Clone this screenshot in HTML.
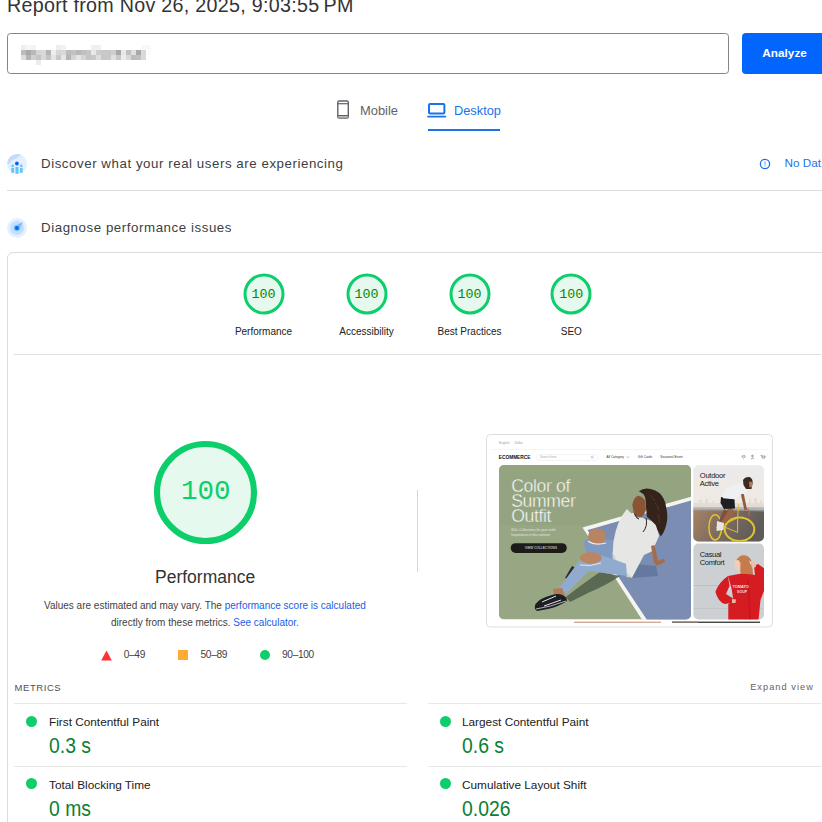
<!DOCTYPE html>
<html><head><meta charset="utf-8">
<style>
*{margin:0;padding:0;box-sizing:border-box}
html,body{width:822px;height:822px;overflow:hidden;background:#fff}
body{position:relative;font-family:"Liberation Sans",sans-serif;color:#202124}
.a{position:absolute;white-space:nowrap}
.t{line-height:1}
</style></head><body>

<!-- header -->
<div class="a t" id="hdr" style="left:7px;top:-3.9px;font-size:19.7px;letter-spacing:0.28px;color:#333336">Report from Nov 26, 2025, 9:03:55&#8201;PM</div>

<!-- input -->
<div class="a" style="left:7px;top:33px;width:722px;height:41px;border:1px solid #80868b;border-radius:3.5px"></div>
<svg class="a" style="left:21px;top:45px" width="130" height="20" viewBox="0 0 130 20" shape-rendering="crispEdges"><rect x="0" y="0" width="5" height="5" fill="#eeeeee"/><rect x="5" y="0" width="5" height="5" fill="#f6f6f6"/><rect x="10" y="0" width="5" height="5" fill="#f3f3f3"/><rect x="35" y="0" width="5" height="5" fill="#eeeeee"/><rect x="40" y="0" width="5" height="5" fill="#f2f2f2"/><rect x="70" y="0" width="5" height="5" fill="#f0f0f0"/><rect x="75" y="0" width="5" height="5" fill="#f0f0f0"/><rect x="120" y="0" width="5" height="5" fill="#f8f8f8"/><rect x="125" y="0" width="5" height="5" fill="#f8f8f8"/><rect x="0" y="5" width="5" height="5" fill="#bbbbbb"/><rect x="5" y="5" width="5" height="5" fill="#a9a9a9"/><rect x="10" y="5" width="5" height="5" fill="#b9b9b9"/><rect x="15" y="5" width="5" height="5" fill="#d6d6d6"/><rect x="20" y="5" width="5" height="5" fill="#d9d9d9"/><rect x="25" y="5" width="5" height="5" fill="#b4b4b4"/><rect x="30" y="5" width="5" height="5" fill="#eeeeee"/><rect x="35" y="5" width="5" height="5" fill="#d6d6d6"/><rect x="40" y="5" width="5" height="5" fill="#d8d8d8"/><rect x="45" y="5" width="5" height="5" fill="#bcbcbc"/><rect x="50" y="5" width="5" height="5" fill="#c2c2c2"/><rect x="55" y="5" width="5" height="5" fill="#b8b8b8"/><rect x="60" y="5" width="5" height="5" fill="#c0c0c0"/><rect x="65" y="5" width="5" height="5" fill="#c5c5c5"/><rect x="70" y="5" width="5" height="5" fill="#e8e8e8"/><rect x="75" y="5" width="5" height="5" fill="#cccccc"/><rect x="80" y="5" width="5" height="5" fill="#c8c8c8"/><rect x="85" y="5" width="5" height="5" fill="#c8c8c8"/><rect x="90" y="5" width="5" height="5" fill="#cdcdcd"/><rect x="95" y="5" width="5" height="5" fill="#a8a8a8"/><rect x="100" y="5" width="5" height="5" fill="#e8e8ea"/><rect x="105" y="5" width="5" height="5" fill="#c0c0c0"/><rect x="110" y="5" width="5" height="5" fill="#e0e0e2"/><rect x="115" y="5" width="5" height="5" fill="#a8a8aa"/><rect x="120" y="5" width="5" height="5" fill="#d8d8d8"/><rect x="125" y="5" width="5" height="5" fill="#fbfbfb"/><rect x="0" y="10" width="5" height="5" fill="#dcdde0"/><rect x="5" y="10" width="5" height="5" fill="#b5b5b5"/><rect x="10" y="10" width="5" height="5" fill="#cfcfcf"/><rect x="15" y="10" width="5" height="5" fill="#c5c5c5"/><rect x="20" y="10" width="5" height="5" fill="#d8d8d8"/><rect x="25" y="10" width="5" height="5" fill="#c4c4c4"/><rect x="30" y="10" width="5" height="5" fill="#e2e4e6"/><rect x="35" y="10" width="5" height="5" fill="#c8c8c8"/><rect x="40" y="10" width="5" height="5" fill="#e6e6e6"/><rect x="45" y="10" width="5" height="5" fill="#b5b5b8"/><rect x="50" y="10" width="5" height="5" fill="#d3d3d3"/><rect x="55" y="10" width="5" height="5" fill="#e5e5e5"/><rect x="60" y="10" width="5" height="5" fill="#d5d5d5"/><rect x="65" y="10" width="5" height="5" fill="#c5c5c5"/><rect x="70" y="10" width="5" height="5" fill="#c8c8c8"/><rect x="75" y="10" width="5" height="5" fill="#dedede"/><rect x="80" y="10" width="5" height="5" fill="#c8c8c8"/><rect x="85" y="10" width="5" height="5" fill="#c8c8c8"/><rect x="90" y="10" width="5" height="5" fill="#e0e0e0"/><rect x="95" y="10" width="5" height="5" fill="#c8c8c8"/><rect x="100" y="10" width="5" height="5" fill="#ececea"/><rect x="105" y="10" width="5" height="5" fill="#d8d8d8"/><rect x="110" y="10" width="5" height="5" fill="#bdbdbd"/><rect x="115" y="10" width="5" height="5" fill="#c0c0c0"/><rect x="120" y="10" width="5" height="5" fill="#dadada"/><rect x="15" y="15" width="5" height="5" fill="#ececec"/></svg>

<!-- analyze -->
<div class="a" style="left:742px;top:33px;width:90px;height:41px;background:#0265fe;border-radius:4px"></div>
<div class="a t" style="left:762.3px;top:47.8px;font-size:11.8px;font-weight:bold;color:#fff">Analyze</div>

<!-- tabs -->
<svg class="a" style="left:336px;top:99px" width="14" height="21" viewBox="0 0 14 21">
  <rect x="1.8" y="2" width="10.5" height="17.1" rx="1.4" fill="none" stroke="#5f6368" stroke-width="1.4"/>
  <rect x="1.5" y="4.1" width="11" height="1.2" fill="#5f6368"/>
  <rect x="1.5" y="16" width="11" height="1.1" fill="#5f6368"/>
  <rect x="2.5" y="17.1" width="9.2" height="1.6" fill="#a9abad"/>
</svg>
<div class="a t" style="left:360px;top:105px;font-size:12.9px;color:#5f6368">Mobile</div>

<svg class="a" style="left:426px;top:101px" width="22" height="18" viewBox="0 0 22 18">
  <rect x="3" y="2.9" width="15.4" height="9.7" rx="1" fill="none" stroke="#1a73e8" stroke-width="2"/>
  <rect x="1.1" y="14.7" width="19.2" height="1.7" rx="0.8" fill="#1a73e8"/>
</svg>
<div class="a t" style="left:454px;top:105px;font-size:12.8px;color:#1a73e8">Desktop</div>
<div class="a" style="left:428px;top:129px;width:72px;height:2px;background:#1a73e8"></div>

<!-- discover row -->
<svg class="a" style="left:7px;top:154px" width="20" height="20" viewBox="0 0 20 20">
  <circle cx="10" cy="10" r="10" fill="#e5f0fe"/>
  <path d="M0.2 9.6 A10 10 0 0 1 14.5 1.1 L12.3 2 L10.5 4 L8 5 L5 6.5 L3 9 L1.5 10.6 Z" fill="#c3dbfc"/>
  <circle cx="9.9" cy="9.5" r="1.9" fill="#0962f6"/>
  <circle cx="5.7" cy="11.9" r="1.3" fill="#64c4fd"/>
  <circle cx="14.3" cy="11.9" r="1.3" fill="#64c4fd"/>
  <rect x="4.3" y="14" width="2.8" height="4.8" fill="#64c4fd"/>
  <rect x="8.5" y="12.9" width="3" height="6.9" fill="#64c4fd"/>
  <rect x="12.9" y="14" width="2.8" height="4.8" fill="#64c4fd"/>
</svg>
<div class="a t" style="left:41px;top:157px;font-size:13.3px;letter-spacing:0.55px;color:#3c4043">Discover what your real users are experiencing</div>
<svg class="a" style="left:759px;top:158px" width="12" height="12" viewBox="0 0 12 12">
  <circle cx="6" cy="6" r="4.6" fill="none" stroke="#1a73e8" stroke-width="1.3"/>
  <rect x="5.5" y="3.5" width="1" height="3.4" fill="#1a73e8" opacity="0.7"/>
  <rect x="5.5" y="7.7" width="1" height="1" fill="#1a73e8" opacity="0.7"/>
</svg>
<div class="a t" style="left:784.5px;top:156.8px;font-size:11.7px;letter-spacing:0px;color:#1a73e8">No Dat</div>
<div class="a" style="left:7px;top:190px;width:815px;height:1px;background:#dadce0"></div>

<!-- diagnose row -->
<svg class="a" style="left:7px;top:218px" width="20" height="20" viewBox="0 0 20 20">
  <circle cx="10" cy="10" r="10" fill="#e5f0fe"/>
  <circle cx="10" cy="10" r="7" fill="#c8defd"/>
  <path d="M7.5 7.9 L15.9 4.1 L12.1 12.5 Z" fill="#6fc5fc"/>
  <circle cx="9.9" cy="10.1" r="3.2" fill="#6fc5fc"/>
  <circle cx="9.9" cy="10.1" r="2" fill="#0962f6"/>
</svg>
<div class="a t" style="left:41px;top:221px;font-size:13.3px;letter-spacing:0.56px;color:#3c4043">Diagnose performance issues</div>

<!-- card -->
<div class="a" style="left:7px;top:252px;width:830px;height:700px;border:1px solid #dadce0;border-radius:6px"></div>

<!-- small gauges -->
<svg class="a" style="left:241.5px;top:272px" width="44" height="44" viewBox="0 0 44 44"><circle cx="22" cy="22" r="19" fill="#e6f9ee" stroke="#0cce6b" stroke-width="3"/></svg>
<div class="a t" style="left:223.5px;width:80px;text-align:center;top:288px;font-size:13.3px;font-family:'Liberation Mono',monospace;color:#008a00">100</div>
<div class="a t" style="left:218.5px;width:90px;text-align:center;top:327px;font-size:10px;color:#212121">Performance</div>
<svg class="a" style="left:344.5px;top:272px" width="44" height="44" viewBox="0 0 44 44"><circle cx="22" cy="22" r="19" fill="#e6f9ee" stroke="#0cce6b" stroke-width="3"/></svg>
<div class="a t" style="left:326.5px;width:80px;text-align:center;top:288px;font-size:13.3px;font-family:'Liberation Mono',monospace;color:#008a00">100</div>
<div class="a t" style="left:321.5px;width:90px;text-align:center;top:327px;font-size:10px;color:#212121">Accessibility</div>
<svg class="a" style="left:447.5px;top:272px" width="44" height="44" viewBox="0 0 44 44"><circle cx="22" cy="22" r="19" fill="#e6f9ee" stroke="#0cce6b" stroke-width="3"/></svg>
<div class="a t" style="left:429.5px;width:80px;text-align:center;top:288px;font-size:13.3px;font-family:'Liberation Mono',monospace;color:#008a00">100</div>
<div class="a t" style="left:424.5px;width:90px;text-align:center;top:327px;font-size:10px;color:#212121">Best Practices</div>
<svg class="a" style="left:549.3px;top:272px" width="44" height="44" viewBox="0 0 44 44"><circle cx="22" cy="22" r="19" fill="#e6f9ee" stroke="#0cce6b" stroke-width="3"/></svg>
<div class="a t" style="left:531.3px;width:80px;text-align:center;top:288px;font-size:13.3px;font-family:'Liberation Mono',monospace;color:#008a00">100</div>
<div class="a t" style="left:526.3px;width:90px;text-align:center;top:327px;font-size:10px;color:#212121">SEO</div>

<div class="a" style="left:14px;top:354px;width:807px;height:1px;background:#e0e0e0"></div>

<!-- big gauge -->
<svg class="a" style="left:153px;top:440px" width="105" height="105" viewBox="0 0 105 105">
  <circle cx="52.5" cy="52.5" r="48.5" fill="#e6f9ee" stroke="#0cce6b" stroke-width="6.2"/>
</svg>
<div class="a t" style="left:181px;top:478px;font-size:27.5px;font-family:'Liberation Mono',monospace;color:#0cce6b">100</div>
<div class="a t" style="left:155px;top:569px;font-size:17.5px;color:#333333">Performance</div>
<div class="a t" style="left:44px;top:601px;font-size:10px;color:#424242">Values are estimated and may vary. The <span style="color:#1a5ce8">performance score is calculated</span></div>
<div class="a t" style="left:111px;top:618px;font-size:10px;color:#424242">directly from these metrics. <span style="color:#1a5ce8">See calculator.</span></div>

<!-- legend -->
<svg class="a" style="left:101px;top:650px" width="11" height="11" viewBox="0 0 11 11"><path d="M5.5 0.5 L10.8 10.5 L0.2 10.5 Z" fill="#ff3333"/></svg>
<div class="a t" style="left:123.7px;top:649.6px;font-size:10.2px;letter-spacing:-0.35px;color:#424242">0–49</div>
<div class="a" style="left:178px;top:650px;width:10px;height:10px;background:#ffaa33"></div>
<div class="a t" style="left:200.5px;top:649.6px;font-size:10.2px;letter-spacing:-0.35px;color:#424242">50–89</div>
<div class="a" style="left:260px;top:650px;width:10px;height:10px;border-radius:50%;background:#0cce6b"></div>
<div class="a t" style="left:282px;top:649.6px;font-size:10.2px;letter-spacing:-0.35px;color:#424242">90–100</div>

<!-- vertical divider -->
<div class="a" style="left:417px;top:490px;width:1px;height:82px;background:#d6d6d6"></div>

<!-- screenshot thumb -->
<svg class="a" style="left:486px;top:434px" width="288" height="194" viewBox="486 434 288 194">
<defs>
  <clipPath id="heroclip"><rect x="499" y="465" width="192" height="154.5" rx="5"/></clipPath>
  <clipPath id="oclip"><rect x="693.3" y="465.2" width="70.7" height="76.3" rx="5"/></clipPath>
  <clipPath id="cclip"><rect x="693.4" y="543.6" width="70.6" height="75.8" rx="5"/></clipPath>
  <linearGradient id="sky" x1="0" y1="0" x2="0" y2="1">
    <stop offset="0" stop-color="#ebebeb"/><stop offset="0.5" stop-color="#efe9e2"/><stop offset="0.6" stop-color="#e9dfd3"/><stop offset="1" stop-color="#ddd2c6"/>
  </linearGradient>
  <linearGradient id="ground" x1="0" y1="0" x2="1" y2="0.3">
    <stop offset="0" stop-color="#a78466"/><stop offset="0.5" stop-color="#7d6c60"/><stop offset="1" stop-color="#5e5b5a"/>
  </linearGradient>
</defs>
<rect x="486.5" y="434.5" width="286" height="192.5" rx="4" fill="#fff" stroke="#dedede"/>
<!-- top bar -->
<g font-family="Liberation Sans" font-size="3.2" fill="#a0a0a0">
  <text x="499" y="444">English</text><text x="514.5" y="444">Dollar</text>
</g>
<rect x="491" y="449" width="277" height="0.6" fill="#eeeeee"/>
<text x="498.8" y="459.3" font-family="Liberation Sans" font-weight="bold" font-size="4.85" fill="#111" letter-spacing="-0.05">ECOMMERCE</text>
<rect x="536.7" y="454.6" width="61.3" height="5.8" rx="2.9" fill="#fff" stroke="#e6e6e6" stroke-width="0.5"/>
<text x="540" y="458.4" font-family="Liberation Sans" font-size="3" fill="#aaa">Search here</text>
<circle cx="592.3" cy="457.2" r="1" fill="none" stroke="#888" stroke-width="0.4"/>
<g font-family="Liberation Sans" font-size="3.2" fill="#333">
  <text x="606.5" y="458.3">All Category</text>
  <text x="637.8" y="458.3">Gift Cards</text>
  <text x="660.3" y="458.3">Seasonal Event</text>
</g>
<path d="M626.8 456.6 l1 1 l1 -1" fill="none" stroke="#444" stroke-width="0.45"/>
<path d="M742 456 q1 -1.2 1.6 0 q0.6 -1.2 1.6 0 q0 1.2 -1.6 2.3 q-1.6 -1.1 -1.6 -2.3z" fill="none" stroke="#444" stroke-width="0.5"/>
<circle cx="752.5" cy="456" r="0.9" fill="none" stroke="#444" stroke-width="0.5"/>
<path d="M750.9 459 q1.6 -2 3.2 0" fill="none" stroke="#444" stroke-width="0.5"/>
<path d="M760.6 455.3 h1 l0.8 2.8 h2.2 l0.6 -2 h-3.2" fill="none" stroke="#444" stroke-width="0.5"/>

<!-- hero -->
<g clip-path="url(#heroclip)">
  <rect x="499" y="465" width="192" height="154.5" fill="#97a683"/>
  <rect x="499" y="465" width="192" height="60" fill="#93a380" opacity="0.6"/>
  <!-- court blue -->
  <path d="M586 530.5 L692 500 L692 620 L647 620 Z" fill="#7b8db2"/>
  <!-- white lines -->
  <path d="M582.5 527.4 L692 496.4 L692 500.2 L587.5 530 L647 620 L642.2 620 Z" fill="#f4f4f2"/>
  <!-- shadow -->
  <path d="M566 597 Q585 582 600 572 L620 576 Q605 586 590 592 L570 602 Z" fill="#4f5e4a" opacity="0.85"/>
  <path d="M626 563 L656 566 L658 576 L632 578 Z" fill="#5d6f97" opacity="0.7"/>
  <!-- back shoe -->
  <path d="M565 578 L572 566 L578 569 L574 582 Z" fill="#2a2c30"/>
  <!-- jeans back leg (knee1) -->
  <path d="M583 543 Q588 536 598 538 L614 540 Q622 548 626 566 L606 566 Q600 558 597 553 L588 556 Z" fill="#7f99c0"/>
  <ellipse cx="597" cy="536.5" rx="9" ry="8" fill="#b98462"/>
  <path d="M588 541 Q595 546 606 543" stroke="#e8ecef" stroke-width="1.2" fill="none"/>
  <!-- shirt -->
  <path d="M627 509 Q631 514 635 515 L644 518.5 L656 522.5 L659 536 L652.5 551 L644 555 L632 577.7 Q626 575 621 570 L612.6 555 L613.4 541.5 Q617 520 627 509 Z" fill="#e6e6e4"/>
  <path d="M612.6 552 Q618 566 632 577.7 L627 577 Q617 568 612.6 558 Z" fill="#d2d2d0"/>
  <!-- hair -->
  <path d="M638.9 491.3 Q643 488 649 488.7 Q656 490 660 493.5 Q665 499 665.9 505.9 Q667.5 512 667.3 519 Q666 530 660.8 536.6 Q657 530 655.7 524.9 Q651 520 646.9 516.8 Q646 508 645.4 498.6 Q644 494 642.5 493.5 Z" fill="#33231a"/>
  <path d="M650 495 q3 2 5 6 M655 503 q3 3 4 8 M658 514 q2 5 1 10" stroke="#5a3a26" stroke-width="0.8" fill="none"/>
  <path d="M646 518 Q648 526 643 532" stroke="#33231a" stroke-width="1" fill="none"/>
  <!-- face -->
  <path d="M632.3 504.4 Q634 497 638.1 495.7 Q642 496 644.7 500 L646 510 Q644 516 640.3 517.6 Q636 517 633.8 513.2 Z" fill="#8b5535"/>
  <path d="M634.5 514 Q637 518.5 639 519" stroke="#2a3550" stroke-width="1.2" fill="none"/>
  <!-- arm -->
  <path d="M651 546 L654.5 545 L658 561 L664 558.5 L665 562 L657 566 L654 563 Z" fill="#a66c48"/>
  <!-- front leg jeans -->
  <path d="M601.8 555.3 L626 563.8 L627 576 L588.4 571 L566.5 594 L559.2 588 L578.7 561.4 Z" fill="#91abcf"/>
  <ellipse cx="590.7" cy="558" rx="11" ry="5.8" fill="#bb8561"/>
  <path d="M580 565 Q590 567 601 563" stroke="#e3e8ee" stroke-width="1" fill="none"/>
  <!-- ankle -->
  <path d="M553 589 L562 588 L565 597 L555 599 Z" fill="#b27a55"/>
  <!-- shoe -->
  <path d="M535.5 604 Q540 598 552 595 Q561 592 566.5 598 L567 601 Q560 606 548 609 L537 611 Q533.5 609 535.5 604Z" fill="#1c1e24"/>
  <path d="M542 602 L556 596 M544 606 L561 600" stroke="#e4e4e4" stroke-width="1" fill="none"/>
  <path d="M536 609 Q550 607 566 601" stroke="#d8d8d8" stroke-width="0.8" fill="none"/>
  <!-- hero text -->
  <g font-family="Liberation Sans" font-size="17.6" fill="#fff" letter-spacing="-0.35" stroke="#97a683" stroke-width="0.45">
    <text x="511.2" y="491.6">Color of</text>
    <text x="511.2" y="506.7">Summer</text>
    <text x="511.2" y="521.7">Outfit</text>
  </g>
  <g font-family="Liberation Sans" font-size="3.3" fill="#eef0ea" opacity="0.9">
    <text x="511" y="530.8">300+ Collections for your outfit</text>
    <text x="511" y="535.6">Inspirations in this summer</text>
  </g>
  <rect x="510.7" y="543.2" width="56.1" height="9.7" rx="4.85" fill="#1b1b1a"/>
  <text x="525" y="549.2" font-family="Liberation Sans" font-size="3" fill="#fff" letter-spacing="0.15">VIEW COLLECTIONS</text>
</g>

<!-- outdoor card -->
<g clip-path="url(#oclip)">
  <rect x="693" y="465" width="72" height="77" fill="url(#sky)"/>
  <path d="M693 503 h6 v-3 h3 v3 h3 v-4 h3 v4 h4 v-2 h2 v2 h35 v-4 h2 v4 h3 v-5 h3 v5 h3 v-3 h2 v3 h6 v5 h-76 z" fill="#dcd6cf" opacity="0.6"/>
  <path d="M693 509.5 Q720 509 765 510 V542 H693 Z" fill="url(#ground)"/>
  <path d="M693 507.3 L765 507.3 V511.5 Q730 510 693 510.5 Z" fill="#a3a4a8" opacity="0.75"/>
  <!-- wheels -->
  <ellipse cx="715.2" cy="527.4" rx="6.3" ry="12.6" fill="none" stroke="#e0c32e" stroke-width="1.5"/>
  <ellipse cx="739.5" cy="529.3" rx="14.8" ry="11.8" fill="none" stroke="#e0c32e" stroke-width="2"/>
  <path d="M716 528 L737.6 518 L738.7 504.5 M737.6 518 L737.6 532.4 M722 526 L737.6 532.4" fill="none" stroke="#d9bf3a" stroke-width="1"/>
  <path d="M745 508 Q751 509 748.5 516" fill="none" stroke="#c8673a" stroke-width="1.1"/>
  <!-- man -->
  <path d="M729 506.5 L735.6 511.7 L723 526 L720.5 524 Z" fill="#9a6446"/>
  <path d="M724 509.6 L728 511 L720 524 L718 523 Z" fill="#7e503a"/>
  <path d="M717 521 L724 523 L723.5 530 L716.5 531 Z" fill="#e6e6e6"/>
  <path d="M721 497 L734.5 499.3 L735 508.6 L724 509 L720.5 503 Z" fill="#1f1f23"/>
  <path d="M739.7 489 L743 490 L747 509.6 L744.5 510.5 Z" fill="#8f5c40"/>
  <path d="M722 494 Q726 488 730 486 L742 483 Q748 483 750 486 L746 494 L741.8 494.1 L734.5 499.3 L723 498.3 Z" fill="#eef0f1"/>
  <path d="M743 480 Q745 476.5 749.5 477 Q753 478.5 752.6 483 L751.5 489 L746 489 L743.5 485 Z" fill="#3b2a20"/>
  <path d="M749 481.5 L752.5 482 L752 487 L749.5 487.5 Z" fill="#b07a58"/>
  <g font-family="Liberation Sans" font-size="7.6" fill="#1a1a1a" letter-spacing="-0.3">
    <text x="699.8" y="477.8">Outdoor</text>
    <text x="699.8" y="485.9">Active</text>
  </g>
</g>

<!-- casual card -->
<g clip-path="url(#cclip)">
  <rect x="693" y="543" width="72" height="77" fill="#ccd0d3"/>
  <rect x="693" y="585.2" width="72" height="0.6" fill="#b8b4b2"/>
  <rect x="693" y="608.3" width="72" height="0.5" fill="#bdbdbd"/>
  <!-- hair -->
  <path d="M736 561 Q739 554.5 745 555.3 Q751 557 752 563 L753 575 L748 579.5 L742 579.4 Q740 572 740 566 Z" fill="#c47c4c"/>
  <path d="M749 560.5 L752 562.5 L751 565 Z" fill="#f0f0f0"/>
  <!-- face -->
  <path d="M733.9 563 Q735 559.5 738.5 560 L740.5 563 L740 570.4 Q736.5 571 735 568 L734.5 566 Z" fill="#efcdb9"/>
  <!-- sweatshirt -->
  <path d="M728 576 L740 573.8 L746 574 L752 574.5 L755 575 L754 566 L758 564 L765 569 L765 588 L760.5 600 L758.5 620 L728.3 620 L728.3 604 L733.5 601 L731.5 588 Z" fill="#d51c22"/>
  <path d="M728 576 Q719 582 715.4 591.7 Q718 602 725 604 L733 602.5 L734 599 L726 594 L729.5 586 Z" fill="#d51c22"/>
  <path d="M750.6 562 L755 561 L756 567 L752 568 Z" fill="#e9c2ad"/>
  <path d="M732 599 L736 599.5 L735.5 603 L732 603 Z" fill="#e6b9a0"/>
  <path d="M748 580 L750 620" stroke="#a81215" stroke-width="0.6"/>
  <text x="732.5" y="587.5" font-family="Liberation Sans" font-weight="bold" font-size="4" fill="#f1dede" letter-spacing="-0.1">TOMATO</text>
  <text x="737" y="592.8" font-family="Liberation Sans" font-weight="bold" font-size="3.6" fill="#f1dede">SOUP</text>
  <g font-family="Liberation Sans" font-size="7.5" fill="#1a1a1a" letter-spacing="-0.3">
    <text x="699.7" y="556.5">Casual</text>
    <text x="699.7" y="564.6">Comfort</text>
  </g>
</g>
<!-- bottom strips -->
<rect x="574" y="621.6" width="87" height="1.3" fill="#d2a18a"/>
<rect x="672" y="621.6" width="88" height="1.3" fill="#323733"/><rect x="672" y="621.6" width="26" height="1.3" fill="#8a8078"/>
</svg>


<!-- metrics -->
<div class="a t" style="left:14.6px;top:682.8px;font-size:9.5px;letter-spacing:0.55px;color:#4d5156">METRICS</div>
<div class="a t" style="left:750.2px;top:683.1px;font-size:9.2px;letter-spacing:1.05px;color:#5f6368">Expand view</div>
<div class="a" style="left:14px;top:703px;width:393px;height:1px;background:#e8e8e8"></div>
<div class="a" style="left:428px;top:703px;width:393px;height:1px;background:#e8e8e8"></div>
<div class="a" style="left:14px;top:766px;width:393px;height:1px;background:#e8e8e8"></div>
<div class="a" style="left:428px;top:766px;width:393px;height:1px;background:#e8e8e8"></div>

<div class="a" style="left:26px;top:716px;width:11px;height:11px;border-radius:50%;background:#0cce6b"></div>
<div class="a t" style="left:49px;top:716.5px;font-size:11.8px;color:#212121">First Contentful Paint</div>
<div class="a t" style="left:49px;top:735.5px;font-size:21.5px;color:#0a8035;transform:scaleX(0.9);transform-origin:0 0">0.3 s</div>

<div class="a" style="left:439.5px;top:716px;width:11px;height:11px;border-radius:50%;background:#0cce6b"></div>
<div class="a t" style="left:462px;top:716.5px;font-size:11.8px;color:#212121">Largest Contentful Paint</div>
<div class="a t" style="left:462px;top:735.5px;font-size:21.5px;color:#0a8035;transform:scaleX(0.9);transform-origin:0 0">0.6 s</div>

<div class="a" style="left:26px;top:778px;width:11px;height:11px;border-radius:50%;background:#0cce6b"></div>
<div class="a t" style="left:49px;top:779.5px;font-size:11.8px;color:#212121">Total Blocking Time</div>
<div class="a t" style="left:49px;top:798.5px;font-size:21.5px;color:#0a8035;transform:scaleX(0.9);transform-origin:0 0">0 ms</div>

<div class="a" style="left:439.5px;top:778px;width:11px;height:11px;border-radius:50%;background:#0cce6b"></div>
<div class="a t" style="left:462px;top:779.5px;font-size:11.8px;color:#212121">Cumulative Layout Shift</div>
<div class="a t" style="left:462px;top:798.5px;font-size:21.5px;color:#0a8035;transform:scaleX(0.9);transform-origin:0 0">0.026</div>

</body></html>
